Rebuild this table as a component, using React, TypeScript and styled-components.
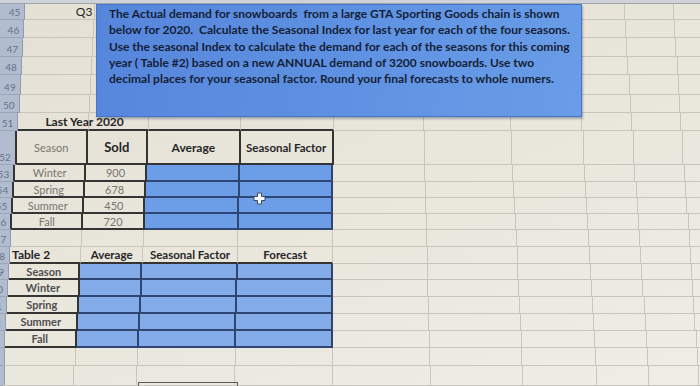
import React from "react";
import styled, { createGlobalStyle } from "styled-components";

const GlobalStyle = createGlobalStyle`
  html, body {
    margin: 0;
    padding: 0;
  }
  body {
    width: 700px;
    height: 386px;
    overflow: hidden;
    background: #e7e4da;
    font-family: Lato, "Open Sans", sans-serif;
  }
`;

// The sheet was photographed at a slight angle, so the column edges drift
// between the top and the bottom of the picture. Edges measured at both ends.
const TOP_EDGES = [0, 26, 96, 155, 244, 334, 421, 505, 575, 624, 673, 722, 780];
const BOTTOM_EDGES = [0, 2, 74, 137, 235, 333, 431, 524, 598, 650, 700, 752, 810];
const SHEET_HEIGHT = 386;
const COLUMN_COUNT = TOP_EDGES.length - 2;

function columnsAt(y: number) {
    const t = y / SHEET_HEIGHT;
    const edges = TOP_EDGES.map((x, i) => x + (BOTTOM_EDGES[i] - x) * t);
    return edges
        .slice(1)
        .map((e, i) => `${(e - edges[i]).toFixed(1)}px`)
        .join(" ");
}

type Tone = "ink" | "soft" | "dim";
type Fill = "none" | "deep" | "pale";
type Align = "left" | "center" | "right";

type CellSpec = {
    text?: string;
    align?: Align;
    bold?: boolean;
    tone?: Tone;
    fill?: Fill;
    darkRight?: boolean;
    darkBottom?: boolean;
    indent?: number;
    size?: number;
};

type RowSpec = {
    n: number;
    h: number;
    edge?: boolean;
    cells: CellSpec[];
};

const TONES: Record<Tone, string> = {
    ink: "#262626",
    soft: "#4f4f4f",
    dim: "#787670",
};

const FILLS: Record<Fill, string> = {
    none: "transparent",
    deep: "#6c9ee8",
    pale: "#83ace9",
};

const GRID = "#c8c5bc";
const DARK = "#343434";
const NAVY = "#2f4572";

const Sheet = styled.div`
  position: relative;
  width: 700px;
  height: 386px;
  overflow: hidden;
  display: flex;
  flex-direction: column;
  background: linear-gradient(160deg, #e4e0d4 0%, #e9e6dc 50%, #efede5 100%);
`;

const ColumnStrip = styled.div`
  height: 4px;
  flex: none;
  box-sizing: border-box;
  background: #cfd2d9;
  border-bottom: 1px solid #9ea4ae;
`;

const Row = styled.div<{ $h: number }>`
  display: grid;
  height: ${p => p.$h}px;
  flex: none;
`;

const RowHead = styled.div<{ $edge: boolean }>`
  display: flex;
  align-items: flex-end;
  justify-content: flex-end;
  box-sizing: border-box;
  overflow: hidden;
  padding: 0 4px 1px 0;
  background: #b1bccf;
  border-bottom: 1px solid #9aa6ba;
  border-right: ${p => (p.$edge ? `2px solid ${DARK}` : "1px solid #8f9bb0")};
  font-size: 10px;
  line-height: 12px;
  color: #66728a;
`;

const Cell = styled.div<{
    $align: Align;
    $bold: boolean;
    $tone: Tone;
    $fill: Fill;
    $dr: boolean;
    $db: boolean;
    $indent: number;
    $size: number;
}>`
  display: flex;
  align-items: center;
  justify-content: ${p =>
    p.$align === "left" ? "flex-start" : p.$align === "right" ? "flex-end" : "center"};
  box-sizing: border-box;
  min-width: 0;
  padding: 0 ${p => (p.$align === "right" ? 2 : 0)}px 0 ${p => p.$indent}px;
  white-space: nowrap;
  font-size: ${p => p.$size}px;
  font-weight: ${p => (p.$bold ? 700 : 400)};
  color: ${p => TONES[p.$tone]};
  background: ${p => FILLS[p.$fill]};
  border-right: ${p =>
    p.$dr ? `2px solid ${p.$fill === "none" ? DARK : NAVY}` : `1px solid ${GRID}`};
  border-bottom: ${p =>
    p.$db ? `2px solid ${p.$fill === "none" ? DARK : NAVY}` : `1px solid ${GRID}`};
`;

const Note = styled.div`
  position: absolute;
  left: 96px;
  top: 4px;
  width: 486px;
  height: 113px;
  box-sizing: border-box;
  padding: 1px 0 0 12px;
  background: linear-gradient(100deg, #5686dc 0%, #5f92e2 55%, #6a9de7 100%);
  border: 1px solid #4674c6;
  box-shadow: 1px 2px 2px rgba(40, 50, 80, 0.35);
  font-size: 12px;
  font-weight: 700;
  line-height: 16.3px;
  color: #141e36;
  white-space: pre;
`;

const Cursor = styled.svg`
  position: absolute;
  left: 253px;
  top: 192px;
`;

const StrayBox = styled.div`
  position: absolute;
  left: 138px;
  top: 382px;
  width: 98px;
  height: 12px;
  border: 1px solid #5a5a5a;
`;

const blank: CellSpec = {};

function row(n: number, h: number, cells: CellSpec[], edge = false): RowSpec {
    const filled = [...cells];
    while (filled.length < COLUMN_COUNT) filled.push(blank);
    return { n, h, edge, cells: filled };
}

const topRule: CellSpec = { darkBottom: true };
const t1Name = (text: string): CellSpec => ({ text, tone: "dim", darkRight: true, darkBottom: true });
const t1Blue: CellSpec = { fill: "deep", darkRight: true, darkBottom: true };
const t2Name = (text: string): CellSpec => ({ text, tone: "soft", bold: true, darkRight: true, darkBottom: true });
const t2Blue: CellSpec = { fill: "pale", darkRight: true, darkBottom: true };

const ROWS: RowSpec[] = [
    row(45, 16, [{ text: "Q3", align: "right", tone: "ink", size: 12 }]),
    row(46, 18, []),
    row(47, 19, []),
    row(48, 18, []),
    row(49, 20, []),
    row(50, 18, []),
    row(51, 18, [
        { text: "Last Year 2020", align: "left", indent: 27, bold: true, tone: "ink", size: 12, darkBottom: true },
        topRule,
        topRule,
        topRule,
    ]),
    row(52, 34, [
        { text: "Season", tone: "dim", darkRight: true, darkBottom: true },
        { text: "Sold", bold: true, tone: "ink", size: 13, darkRight: true, darkBottom: true },
        { text: "Average", bold: true, tone: "ink", size: 12, darkRight: true, darkBottom: true },
        { text: "Seasonal Factor", bold: true, tone: "ink", size: 11.5, darkRight: true, darkBottom: true },
    ], true),
    row(53, 17, [t1Name("Winter"), t1Name("900"), t1Blue, t1Blue], true),
    row(54, 16, [t1Name("Spring"), t1Name("678"), t1Blue, t1Blue], true),
    row(55, 16, [t1Name("Summer"), t1Name("450"), t1Blue, t1Blue], true),
    row(56, 16, [t1Name("Fall"), t1Name("720"), t1Blue, t1Blue], true),
    row(57, 17, []),
    row(58, 17, [
        { text: "Table 2", align: "left", indent: 2, bold: true, tone: "ink", size: 12, darkBottom: true },
        { text: "Average", tone: "ink", size: 11.5, bold: true, darkBottom: true },
        { text: "Seasonal Factor", tone: "ink", size: 11.5, bold: true, darkBottom: true },
        { text: "Forecast", tone: "ink", size: 11.5, bold: true, darkBottom: true },
    ]),
    row(59, 16, [t2Name("Season"), t2Blue, t2Blue, t2Blue]),
    row(60, 17, [t2Name("Winter"), t2Blue, t2Blue, t2Blue]),
    row(61, 17, [t2Name("Spring"), t2Blue, t2Blue, t2Blue]),
    row(62, 17, [t2Name("Summer"), t2Blue, t2Blue, t2Blue]),
    row(63, 17, [t2Name("Fall"), t2Blue, t2Blue, t2Blue]),
    row(64, 18, []),
    row(65, 20, []),
];

const NOTE_LINES = [
    "The Actual demand for snowboards  from a large GTA Sporting Goods chain is shown",
    "below for 2020.  Calculate the Seasonal Index for last year for each of the four seasons.",
    "Use the seasonal Index to calculate the demand for each of the seasons for this coming",
    "year ( Table #2) based on a new ANNUAL demand of 3200 snowboards. Use two",
    "decimal places for your seasonal factor. Round your final forecasts to whole numers.",
];

function SheetRow(props: { spec: RowSpec; top: number }) {
    const { spec, top } = props;
    return (
        <Row $h={spec.h} style={{ gridTemplateColumns: columnsAt(top + spec.h / 2) }}>
            <RowHead $edge={!!spec.edge}>{spec.n}</RowHead>
            {spec.cells.map((c, i) => (
                <Cell
                    key={i}
                    $align={c.align ?? "center"}
                    $bold={!!c.bold}
                    $tone={c.tone ?? "ink"}
                    $fill={c.fill ?? "none"}
                    $dr={!!c.darkRight}
                    $db={!!c.darkBottom}
                    $indent={c.indent ?? 0}
                    $size={c.size ?? 11}
                >
                    {c.text}
                </Cell>
            ))}
        </Row>
    );
}

export default function App() {
    let y = 4;
    return (
        <>
            <GlobalStyle />
            <Sheet>
                <ColumnStrip />
                {ROWS.map(spec => {
                    const top = y;
                    y += spec.h;
                    return <SheetRow key={spec.n} spec={spec} top={top} />;
                })}
                <Note>
                    {NOTE_LINES.map(line => (
                        <div key={line}>{line}</div>
                    ))}
                </Note>
                <Cursor width="13" height="13" viewBox="0 0 13 13">
                    <path
                        d="M4.5 1h4v3.5H12v4H8.5V12h-4V8.5H1v-4h3.5z"
                        fill="#fbfbfd"
                        stroke="#3d4a66"
                        strokeWidth="1"
                    />
                </Cursor>
                <StrayBox />
            </Sheet>
        </>
    );
}
